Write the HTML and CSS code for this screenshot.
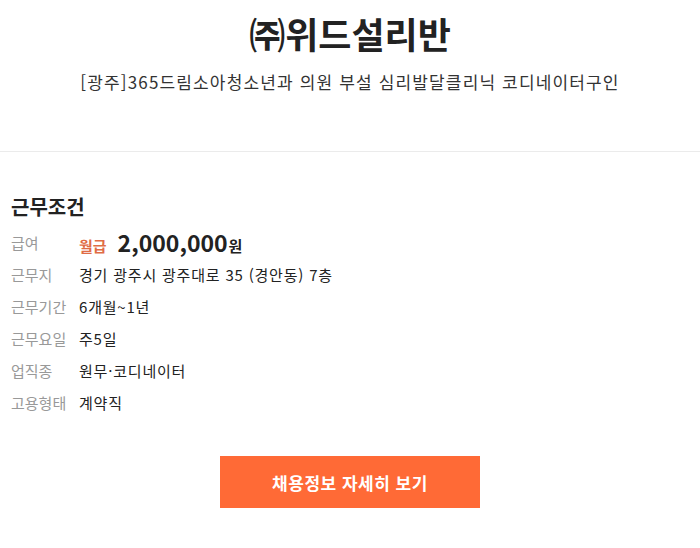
FILE: index.html
```html
<!DOCTYPE html>
<html lang="ko">
<head>
<meta charset="utf-8">
<link rel="stylesheet" href="styles.css">
</head>
<body>
<header class="head">
  <h1 class="company">㈜위드설리반</h1>
  <p class="subtitle">[광주]365드림소아청소년과 의원 부설 심리발달클리닉 코디네이터구인</p>
</header>
<section class="cond">
  <h2 class="cond-title">근무조건</h2>
  <dl class="rows">
    <div class="row salary"><dt>급여</dt><dd><span class="pay-type">월급</span><span class="amount">2,000,000</span><span class="won">원</span></dd></div>
    <div class="row"><dt>근무지</dt><dd>경기 광주시 광주대로 35 (경안동) 7층</dd></div>
    <div class="row"><dt>근무기간</dt><dd>6개월~1년</dd></div>
    <div class="row"><dt>근무요일</dt><dd>주5일</dd></div>
    <div class="row"><dt>업직종</dt><dd>원무·코디네이터</dd></div>
    <div class="row"><dt>고용형태</dt><dd>계약직</dd></div>
  </dl>
  <div class="btn-wrap"><a class="btn">채용정보 자세히 보기</a></div>
</section>
</body>
</html>
```
FILE: styles.css
```css
* { box-sizing: border-box; }
html, body { margin: 0; padding: 0; background: #fff; }
body {
  font-family: "Noto Sans CJK KR", "Noto Sans", sans-serif;
  color: #222;
  width: 700px;
}
.head {
  text-align: center;
  padding-top: 6px;
  height: 152px;
  border-bottom: 1px solid #ebebeb;
}
.company {
  margin: 0;
  font-size: 36px;
  font-weight: 700;
  line-height: 54px;
  color: #222;
}
.subtitle {
  margin: 9px 0 0;
  font-size: 17px;
  line-height: 26px;
  letter-spacing: 1.15px;
  color: #333;
}
.cond { padding: 41px 11px 0; }
.cond-title {
  margin: 0;
  font-size: 20px;
  font-weight: 700;
  line-height: 28px;
  color: #222;
}
.rows { margin: 5px 0 0; }
.row {
  display: flex;
  align-items: center;
  height: 32px;
  font-size: 15px;
}
.row dt { width: 68px; color: #999; }
.row dd { margin: 0; color: #222; display: flex; align-items: baseline; letter-spacing: 0.8px; }
.salary { height: 32px; }
.pay-type { color: #e06c45; font-weight: 700; font-size: 15px; margin-right: 11px; letter-spacing: 0; }
.amount { font-size: 23px; font-weight: 700; color: #222; letter-spacing: 0; }
.won { font-size: 15px; font-weight: 700; color: #222; margin-left: 1px; letter-spacing: 0; }
.btn-wrap { display: flex; justify-content: center; margin-top: 38px; }
.btn {
  display: flex;
  align-items: center;
  justify-content: center;
  width: 260px;
  height: 52px;
  background: #ff6a36;
  color: #fff;
  font-size: 17px;
  letter-spacing: 0.5px;
  font-weight: 700;
}
```
